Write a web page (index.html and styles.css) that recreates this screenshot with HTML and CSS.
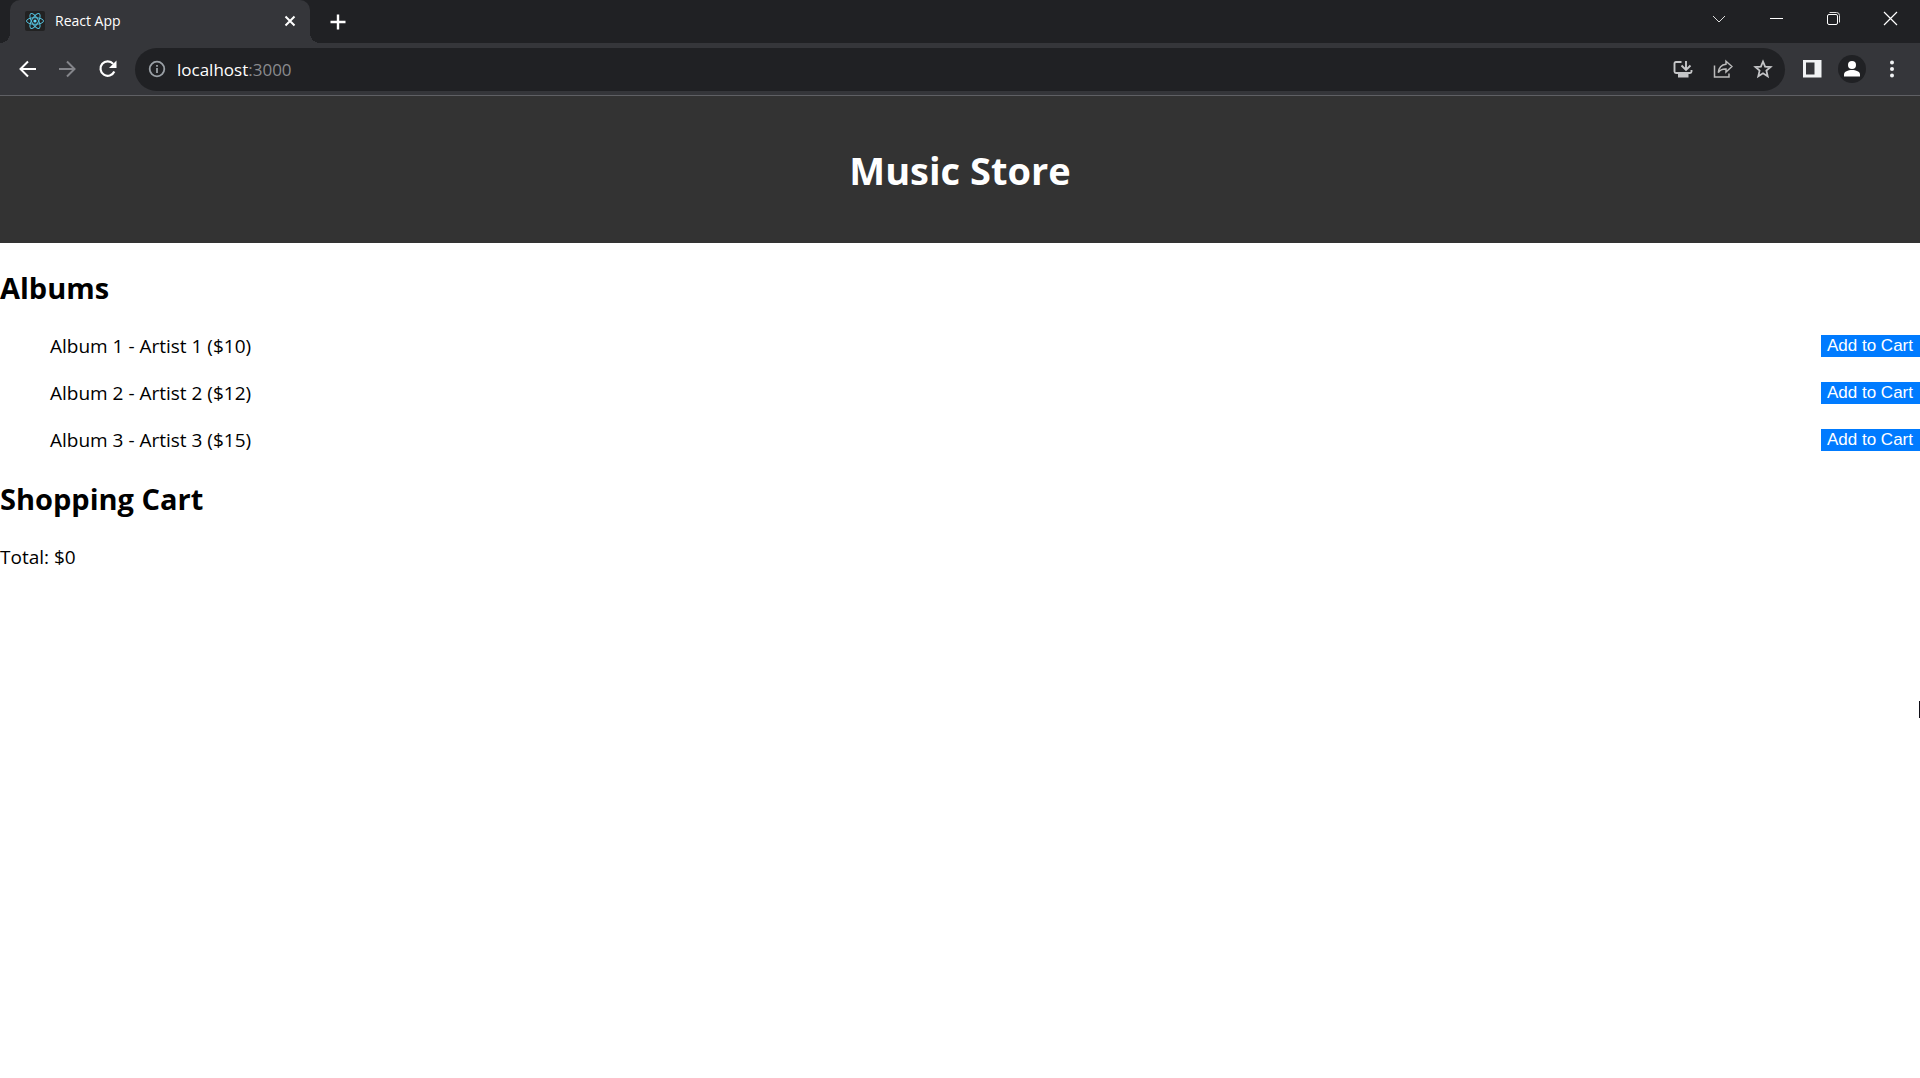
FILE: index.html
```html
<!DOCTYPE html>
<html lang="en">
<head>
<meta charset="utf-8">
<meta name="viewport" content="width=device-width, initial-scale=1">
<title>React App</title>
<link rel="stylesheet" href="styles.css">
</head>
<body>
<div class="browser">
  <div class="tab-strip">
    <div class="tab">
      <svg class="favicon" viewBox="0 0 20 20" width="20" height="20" aria-hidden="true">
        <rect width="20" height="20" rx="2" fill="#222"/>
        <circle cx="10" cy="10" r="1.6" fill="#61dafb"/>
        <g fill="none" stroke="#53bfdb" stroke-width="1">
          <ellipse cx="10" cy="10" rx="8.5" ry="3.3"/>
          <ellipse cx="10" cy="10" rx="8.5" ry="3.3" transform="rotate(60 10 10)"/>
          <ellipse cx="10" cy="10" rx="8.5" ry="3.3" transform="rotate(120 10 10)"/>
        </g>
      </svg>
      <span class="tab-title">React App</span>
      <button class="tab-close" type="button" aria-label="Close tab">
        <svg viewBox="0 0 20 20" width="20" height="20"><path d="M5.5 5.5l9 9M14.5 5.5l-9 9" stroke="#fff" stroke-width="2"/></svg>
      </button>
    </div>
    <button class="new-tab" type="button" aria-label="New tab">
      <svg viewBox="0 0 20 20" width="20" height="20"><path d="M10 2.5v15M2.5 10h15" stroke="#fff" stroke-width="2.4"/></svg>
    </button>
    <div class="window-controls">
      <button type="button" aria-label="Search tabs"><svg viewBox="0 0 20 20" width="20" height="20"><path d="M4 7l6 6 6-6"/></svg></button>
      <button type="button" aria-label="Minimize"><svg viewBox="0 0 20 20" width="20" height="20"><path d="M4 9.500h13" stroke="#fff"/></svg></button>
      <button type="button" aria-label="Restore"><svg viewBox="0 0 20 20" width="20" height="20"><rect x="4.500" y="5.500" width="10" height="10" rx="1.500" stroke="#fff"/><path d="M6.500 3.500h7a3 3 0 0 1 3 3v7"/></svg></button>
      <button type="button" aria-label="Close"><svg viewBox="0 0 20 20" width="20" height="20"><path d="M4 3l13 13M17 3L4 16" stroke="#fff" stroke-width="1.200"/></svg></button>
    </div>
  </div>
  <div class="toolbar">
    <div class="nav-buttons">
      <button type="button" aria-label="Back"><svg viewBox="0 0 20 20" width="20" height="20"><path d="M18 10H3M10 2.500L2.500 10l7.500 7.500" fill="none" stroke="#fff" stroke-width="2"/></svg></button>
      <button type="button" aria-label="Forward"><svg viewBox="0 0 20 20" width="20" height="20"><path d="M1 10h15M9 2.500l7.500 7.500-7.500 7.500" fill="none" stroke="#84858a" stroke-width="2"/></svg></button>
      <button type="button" aria-label="Reload"><svg viewBox="0 0 20 20" width="20" height="20"><path d="M16.300 12.500A7.200 7.200 0 1 1 15.200 4.900" fill="none" stroke="#fff" stroke-width="2.200"/><path d="M18.500 1.500V9H11z" fill="#fff"/></svg></button>
    </div>
    <div class="address-bar">
      <svg class="info" viewBox="0 0 20 20" width="20" height="20" aria-hidden="true"><circle cx="10" cy="10" r="7.300" fill="none" stroke="#9aa0a6" stroke-width="1.800"/><path d="M10 9v5M10 6v1.800" stroke="#9aa0a6" stroke-width="1.800"/></svg>
      <span class="url">localhost<span class="port">:3000</span></span>
      <div class="address-actions">
        <button type="button" aria-label="Install app"><svg viewBox="0 0 20 20" width="20" height="20"><path d="M8.500 3H3Q1.500 3 1.500 4.500V12.500Q1.500 14 3 14h14Q18.500 14 18.500 12.500V11M13 2v8.500M8.500 6.500l4.500 4.500 4.500-4.500" fill="none" stroke="#c4c5c7" stroke-width="1.900"/><path d="M5 14.500h10.500V18.500H5z" fill="#c4c5c7"/></svg></button>
        <button type="button" aria-label="Share"><svg viewBox="0 0 20 20" width="20" height="20"><path d="M1.500 6.500V18H16v-3.500" fill="none" stroke="#bbb" stroke-width="1.500"/><path d="M13 2.200L19 7.500l-6 5.500V9.900C9 9.700 7 10.800 5.300 13.500 5.800 8.800 8.500 5.700 13 5.200z" fill="none" stroke="#bbb" stroke-width="1.500"/></svg></button>
        <button type="button" aria-label="Bookmark"><svg viewBox="0 0 20 20" width="20" height="20"><path d="M10 2.500l2.100 5.100 5.500.4-4.200 3.600 1.300 5.600L10 14.200l-4.700 3 1.300-5.600L2.400 8l5.500-.4z" fill="none" stroke="#c4c5c7" stroke-width="1.800"/></svg></button>
      </div>
    </div>
    <div class="browser-actions">
      <button type="button" aria-label="Side panel"><svg viewBox="0 0 20 20" width="20" height="20"><path fill-rule="evenodd" d="M1 1h18.500v17.500H1zM4 3.500v12h8.500v-12z" fill="#f1f3f4"/></svg></button>
      <button class="profile" type="button" aria-label="Profile"><svg viewBox="0 0 20 20" width="20" height="20"><circle cx="10" cy="6" r="4" fill="#fff"/><path d="M2 17.500v-2C2 12.500 6 11 10 11s8 1.500 8 4.500v2z" fill="#fff"/></svg></button>
      <button type="button" aria-label="Menu"><svg viewBox="0 0 20 20" width="20" height="20"><g fill="#f1f3f4"><circle cx="10" cy="3.500" r="2"/><circle cx="10" cy="10" r="2"/><circle cx="10" cy="16.500" r="2"/></g></svg></button>
    </div>
  </div>
</div>
<header class="store-header"><h1>Music Store</h1></header>
<main>
  <section>
    <h2>Albums</h2>
    <ul class="albums">
      <li><span>Album 1 - Artist 1 ($10)</span><button class="add" type="button">Add to Cart</button></li>
      <li><span>Album 2 - Artist 2 ($12)</span><button class="add" type="button">Add to Cart</button></li>
      <li><span>Album 3 - Artist 3 ($15)</span><button class="add" type="button">Add to Cart</button></li>
    </ul>
  </section>
  <section>
    <h2>Shopping Cart</h2>
    <p class="total">Total: $0</p>
  </section>
</main>
<div class="cursor"></div>
</body>
</html>
```
FILE: styles.css
```css
* { box-sizing: border-box; }

body {
  margin: 0;
  background: #fff;
  color: #000;
  font-family: "Segoe UI", "Open Sans", "Noto Sans", sans-serif;
  font-size: 19px;
  line-height: 27px;
}

button {
  border: 0;
  padding: 0;
  background: none;
}

svg { display: block; }

.tab-strip {
  display: flex;
  height: 43px;
  padding-left: 10px;
  background: #202124;
}

.tab {
  position: relative;
  display: flex;
  align-items: center;
  width: 300px;
  padding: 0 10px 2px 15px;
  border-radius: 10px 10px 0 0;
  background: #35363a;
}

.tab::before,
.tab::after {
  content: "";
  position: absolute;
  bottom: 0;
  width: 10px;
  height: 10px;
}

.tab::before {
  right: 100%;
  background: radial-gradient(circle at 0 0, #202124 10px, #35363a 10px);
}

.tab::after {
  left: 100%;
  background: radial-gradient(circle at 100% 0, #202124 10px, #35363a 10px);
}

.tab-title {
  flex: 1;
  margin-left: 10px;
  color: #fff;
  font-size: 14px;
}

.new-tab { margin-left: 18px; }

.window-controls {
  display: flex;
  height: 38px;
  margin-left: auto;
  padding-right: 2px;
}

.window-controls button {
  display: grid;
  place-items: center;
  width: 57px;
}

.window-controls svg {
  fill: none;
  stroke: #ddd;
}

.toolbar {
  display: flex;
  align-items: center;
  height: 53px;
  padding: 0 18px;
  border-bottom: 1px solid #5f6064;
  background: #35363a;
}

.nav-buttons,
.address-actions,
.browser-actions {
  display: flex;
  align-items: center;
  gap: 20px;
}

.address-bar {
  display: flex;
  flex: 1;
  align-items: center;
  height: 43px;
  margin: 0 17px;
  padding: 0 12px;
  border-radius: 22px;
  background: #202124;
}

.url {
  flex: 1;
  margin-left: 10px;
  color: #fff;
  font-size: 17px;
}

.port { color: #8a8b8e; }

.browser-actions { gap: 16px; }

.profile {
  display: grid;
  place-items: center;
  width: 28px;
  height: 28px;
  border-radius: 50%;
  background: #202124;
}

.store-header {
  padding: 48px 20px 46px;
  background: #333;
  color: #fff;
  text-align: center;
}

h1 {
  margin: 0;
  font-size: 38px;
  line-height: 53px;
}

h2 {
  margin: 25px 0;
  font-size: 29px;
  line-height: 40px;
}

.albums {
  display: grid;
  gap: 20px;
  margin: 0;
  padding: 0 0 0 50px;
  list-style: none;
}

.albums li {
  display: flex;
  align-items: flex-start;
  justify-content: space-between;
}

.add {
  height: 22px;
  margin-top: 2px;
  padding: 0 7px 0 6px;
  background: #007bff;
  color: #fff;
  font: 17px/20px "Liberation Sans", Arial, sans-serif;
}

.total { margin: 0; }

.cursor {
  position: absolute;
  top: 701px;
  right: 0;
  width: 1px;
  height: 17px;
  background: #101018;
}
```
